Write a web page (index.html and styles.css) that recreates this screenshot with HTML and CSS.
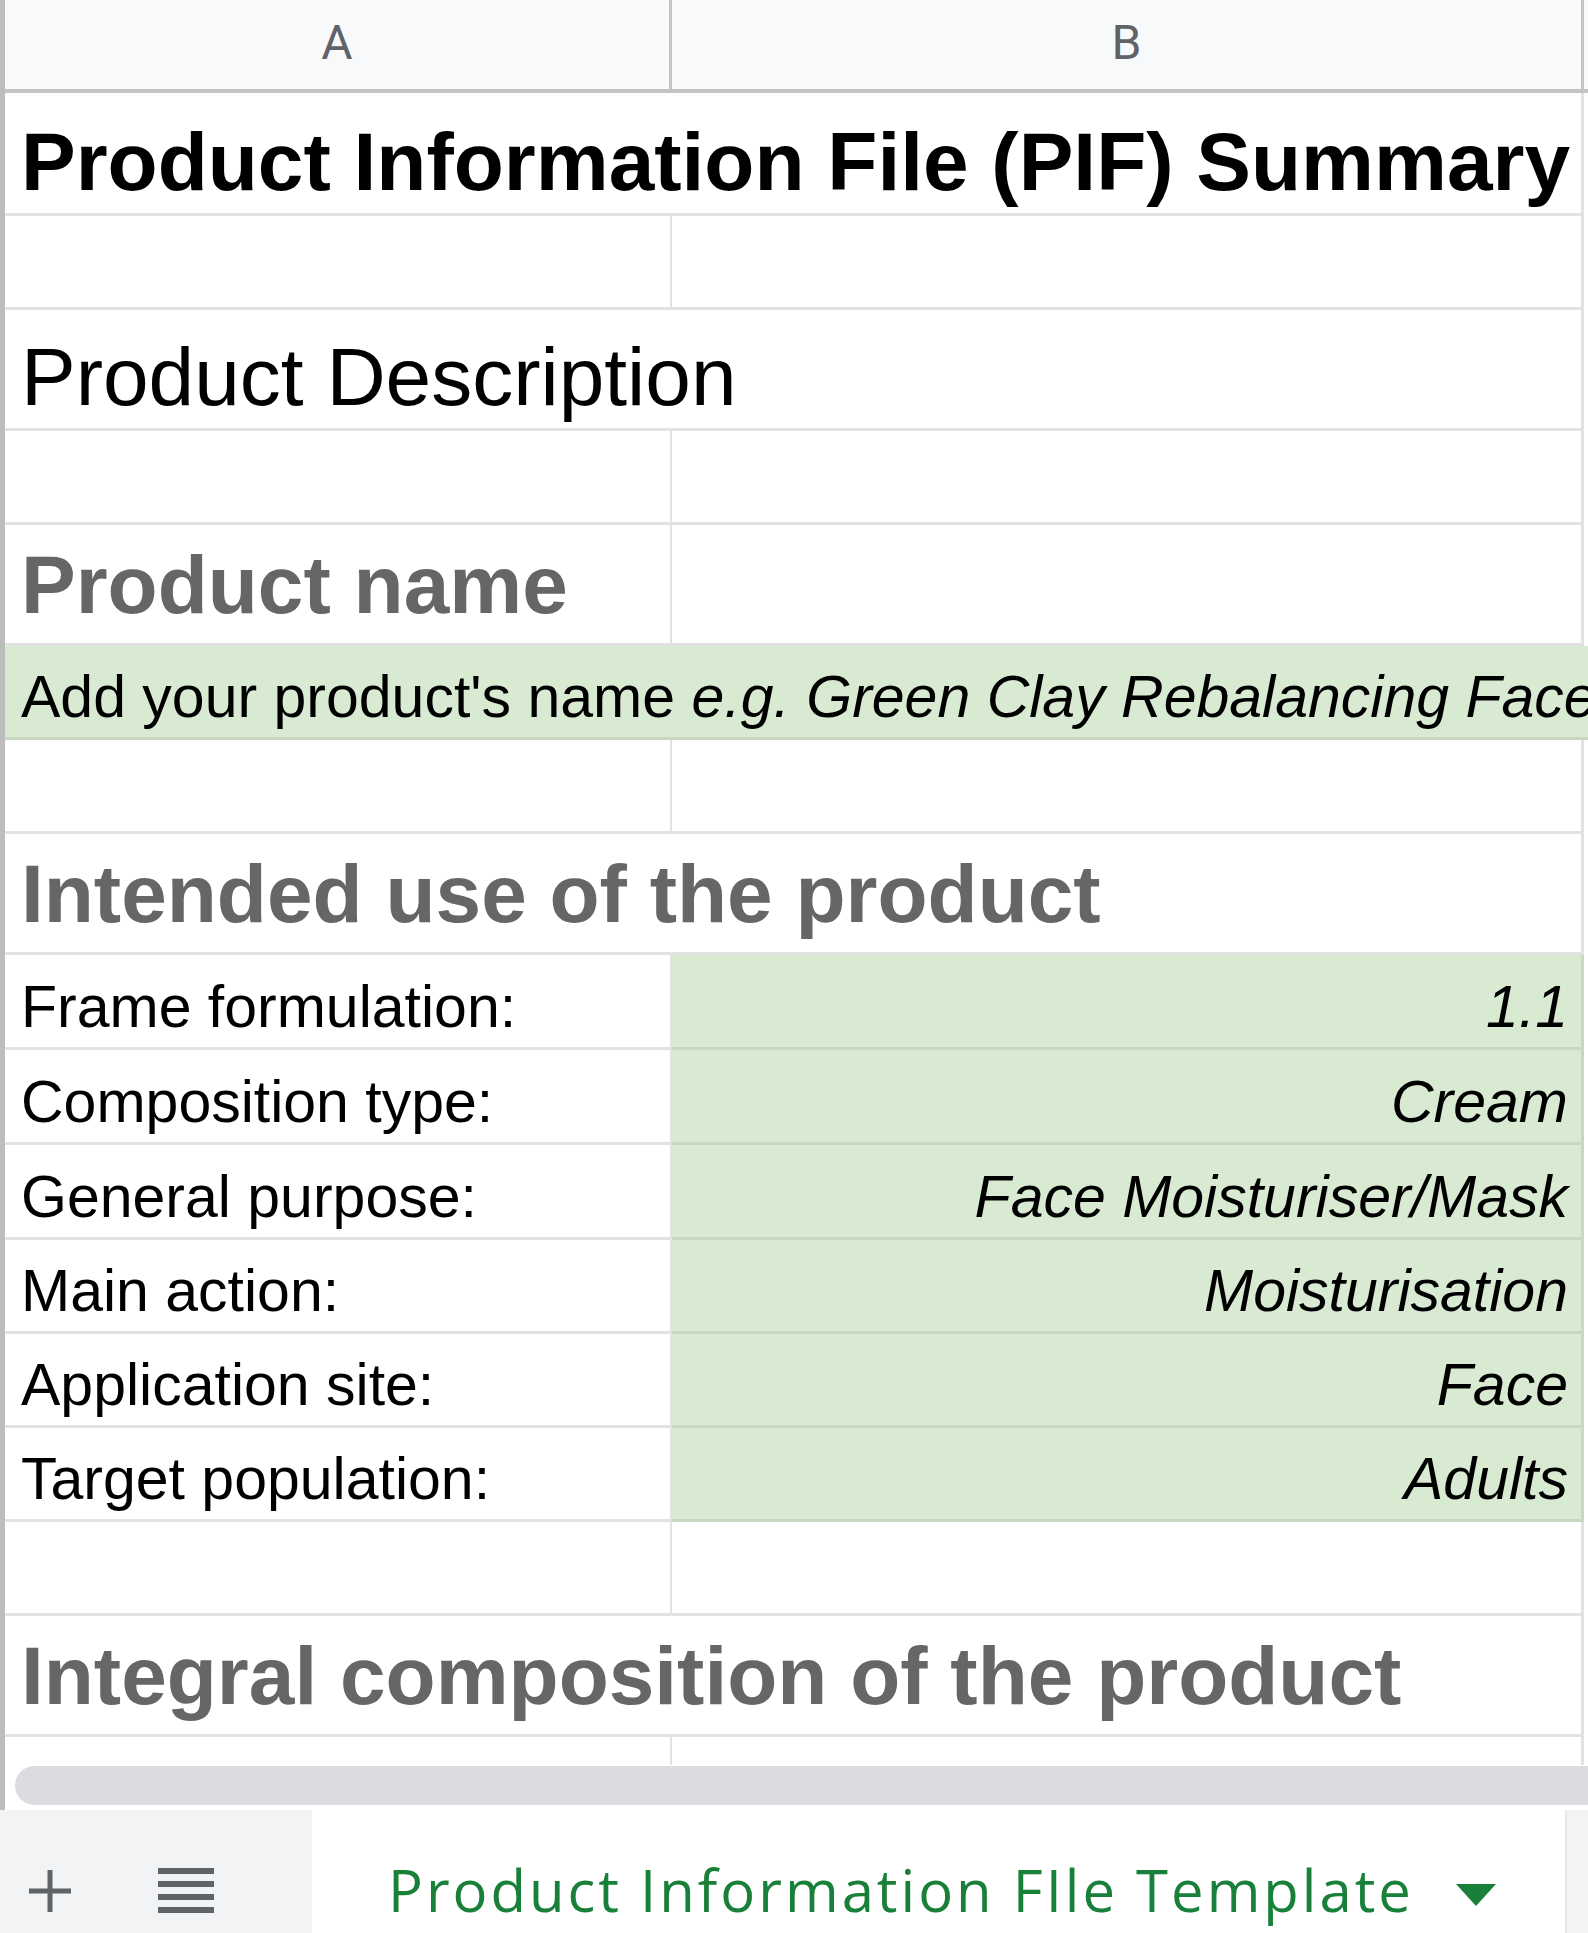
FILE: index.html
```html
<!DOCTYPE html>
<html lang="en">

<head>
    <meta charset="UTF-8">
    <meta name="viewport" content="width=device-width, initial-scale=1.0">
    <title>Product Information File (PIF) Summary</title>
    <link rel="stylesheet" href="styles.css">
</head>

<body>
    <div class="sheet">
        <div class="grid">
            <div class="colhead">
                <div class="ch col-a">A</div>
                <div class="ch col-b">B</div>
            </div>

            <div class="row first">
                <div class="cell wide title">Product Information File (PIF) Summary</div>
            </div>
            <div class="row">
                <div class="cell col-a"></div>
                <div class="cell col-b"></div>
            </div>
            <div class="row tall">
                <div class="cell wide heading">Product Description</div>
            </div>
            <div class="row">
                <div class="cell col-a"></div>
                <div class="cell col-b"></div>
            </div>
            <div class="row tall">
                <div class="cell col-a section">Product name</div>
                <div class="cell col-b"></div>
            </div>
            <div class="row">
                <div class="cell full green">Add your product's name&nbsp;<i>e.g. Green Clay Rebalancing Face Mask</i></div>
            </div>
            <div class="row">
                <div class="cell col-a"></div>
                <div class="cell col-b"></div>
            </div>
            <div class="row tall">
                <div class="cell wide section">Intended use of the product</div>
            </div>

            <div class="row field">
                <div class="cell col-a">Frame formulation:</div>
                <div class="cell col-b green value">1.1</div>
            </div>
            <div class="row field">
                <div class="cell col-a">Composition type:</div>
                <div class="cell col-b green value">Cream</div>
            </div>
            <div class="row field">
                <div class="cell col-a">General purpose:</div>
                <div class="cell col-b green value">Face Moisturiser/Mask</div>
            </div>
            <div class="row">
                <div class="cell col-a">Main action:</div>
                <div class="cell col-b green value">Moisturisation</div>
            </div>
            <div class="row">
                <div class="cell col-a">Application site:</div>
                <div class="cell col-b green value">Face</div>
            </div>
            <div class="row">
                <div class="cell col-a">Target population:</div>
                <div class="cell col-b green value">Adults</div>
            </div>

            <div class="row">
                <div class="cell col-a"></div>
                <div class="cell col-b"></div>
            </div>
            <div class="row tall">
                <div class="cell wide section">Integral composition of the product</div>
            </div>
            <div class="stub">
                <div class="cell col-a"></div>
                <div class="cell col-b"></div>
            </div>

            <div class="hscroll">
                <div class="thumb"></div>
            </div>
        </div>

        <div class="tabbar">
            <div class="tools">
                <svg class="icon" width="44" height="44" viewBox="0 0 44 44">
                    <path d="M22 1v42M1 22h42" stroke="#5f6368" stroke-width="5" fill="none" />
                </svg>
                <svg class="icon" width="56" height="46" viewBox="0 0 56 46">
                    <rect x="0" y="0" width="56" height="6" fill="#5f6368" />
                    <rect x="0" y="13" width="56" height="6" fill="#5f6368" />
                    <rect x="0" y="26" width="56" height="6" fill="#5f6368" />
                    <rect x="0" y="39" width="56" height="6" fill="#5f6368" />
                </svg>
            </div>
            <div class="tab">
                <span class="tab-name">Product Information FIle Template</span>
                <svg class="caret" width="40" height="22" viewBox="0 0 40 22">
                    <path d="M0 0h40L20 22z" fill="#188038" />
                </svg>
            </div>
            <div class="rest"></div>
        </div>
    </div>
</body>

</html>
```

FILE: styles.css
```css
body {
    margin: 0;
    background-color: #fff;
    font-family: "Liberation Sans", Arial, sans-serif;
}

.sheet {
    width: 1588px;
    height: 1933px;
    overflow: hidden;
}

.grid {
    border-left: 5px solid #bdbdbd;
    width: 1583px;
}

/* column letters */
.colhead {
    display: flex;
    height: 93px;
    box-sizing: border-box;
    background-color: #f8f9fa;
    border-bottom: 4px solid #c4c4c4;
}

.ch {
    box-sizing: border-box;
    display: flex;
    justify-content: center;
    align-items: flex-end;
    padding-bottom: 22px;
    border-right: 3px solid #c4c4c4;
    font-family: Roboto, sans-serif;
    font-size: 48px;
    line-height: 1;
    color: #5f6368;
}

/* cells */
.row {
    display: flex;
    height: 94px;
}

.row.field {
    height: 95px;
}

.row.tall {
    height: 121px;
}

.row.first {
    height: 123px;
}

.cell {
    box-sizing: border-box;
    display: flex;
    align-items: flex-end;
    padding: 0 13px 10px 16px;
    border-bottom: 3px solid #e2e2e2;
    border-right: 2px solid #e2e2e2;
    font-size: 59px;
    line-height: 1;
    color: #000;
    white-space: nowrap;
    overflow: hidden;
}

.col-a {
    width: 667px;
}

.col-b {
    width: 912px;
    border-right-width: 3px;
}

.wide {
    width: 1579px;
    border-right-width: 3px;
}

.full {
    width: 1583px;
    border-right: none;
}

.title {
    font-size: 82px;
    font-weight: bold;
}

.heading {
    font-size: 82px;
}

.section {
    font-size: 82px;
    font-weight: bold;
    color: #666;
    padding-bottom: 17px;
}

.green {
    background-color: #d9ead3;
    border-bottom-color: #c9d6c4;
    border-right-color: #c9d6c4;
}

.value {
    justify-content: flex-end;
    font-style: italic;
}

.stub {
    display: flex;
    height: 28px;
}

.stub .cell {
    border-bottom: none;
}

/* horizontal scrollbar */
.hscroll {
    height: 45px;
    padding: 1px 0 0 10px;
    box-sizing: border-box;
}

.thumb {
    height: 39px;
    background-color: #dadce0;
    border-radius: 20px 0 0 20px;
}

/* sheet tabs */
.tabbar {
    display: flex;
    height: 126px;
    background-color: #f1f3f4;
    font-family: "Open Sans", Roboto, sans-serif;
}

.tools {
    width: 312px;
    display: flex;
    align-items: flex-start;
    gap: 86px;
    padding: 59px 0 0 28px;
    box-sizing: border-box;
}

.tools .icon:last-child {
    margin-top: -1px;
}

.tab {
    width: 1253px;
    display: flex;
    align-items: flex-end;
    padding: 0 0 17px 76px;
    box-sizing: border-box;
    background-color: #fff;
    color: #188038;
    font-size: 58px;
    letter-spacing: 3px;
    line-height: 1;
    white-space: nowrap;
}

.caret {
    margin: 0 0 13px 42px;
}

.rest {
    flex: 1;
    border-left: 2px solid #e6e6e6;
}
```
